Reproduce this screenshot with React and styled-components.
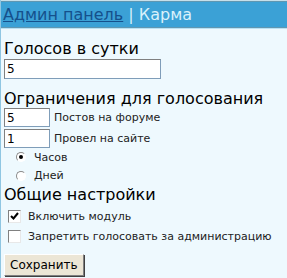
import React from "react";
import styled, { createGlobalStyle } from "styled-components";

const Global = createGlobalStyle`
  html, body {
    margin: 0;
    padding: 0;
    background: #eef9fe;
  }
  body {
    font-family: "DejaVu Sans", Tahoma, sans-serif;
  }
`;

const Panel = styled.div`
  width: 287px;
  height: 278px;
  background: #eef9fe;
  border-left: 1px solid #8fc6e2;
  box-sizing: border-box;
  overflow: hidden;
`;

const Header = styled.div`
  height: 24px;
  background: #3ba1d6;
  border-top: 1px solid #c6dfea;
  box-shadow: inset 0 1px 0 #5f97b2, inset 0 -1px 0 #5f97b2;
  border-bottom: 1px solid #b9e2f4;
  padding: 3px 0 0 3px;
  font-size: 16px;
  line-height: 22px;
  margin-left: -1px;
  white-space: nowrap;
`;

const HeaderLink = styled.a`
  color: #15508c;
  text-decoration: underline;
`;

const HeaderSep = styled.span`
  color: #d9f1fb;
`;

const Body = styled.div`
  padding: 10px 0 0 3px;
`;

const Heading = styled.div`
  font-size: 16px;
  color: #000;
  line-height: 19px;
  margin-top: ${(p) => p.$top || 0}px;
`;

const TextInput = styled.input`
  display: block;
  box-sizing: border-box;
  width: ${(p) => p.$width}px;
  height: ${(p) => p.$height || 19}px;
  margin: ${(p) => p.$top || 0}px 0 0 0;
  padding: 0 2px;
  border: 1px solid #7f9db9;
  border-top-color: #808080;
  border-left-color: #808080;
  background: #fff;
  font-family: "DejaVu Sans", Tahoma, sans-serif;
  font-size: 12px;
  color: #000;
`;

const Row = styled.div`
  display: flex;
  align-items: center;
  gap: 4px;
  margin-top: ${(p) => p.$top || 0}px;
  height: ${(p) => p.$height || 18}px;
  padding-left: ${(p) => p.$indent || 0}px;
`;

const Label = styled.span`
  font-size: 11px;
  color: #222;
`;

const Radio = styled.span`
  width: 10px;
  height: 10px;
  border-radius: 50%;
  box-sizing: border-box;
  border: 1px solid #8a8a8a;
  border-right-color: #fff;
  border-bottom-color: #fff;
  background: #fff;
  display: flex;
  align-items: center;
  justify-content: center;
  margin-right: 4px;
  &::after {
    content: "";
    width: 4px;
    height: 4px;
    border-radius: 50%;
    background: ${(p) => (p.$checked ? "#000" : "transparent")};
  }
`;

const Check = styled.span`
  width: 13px;
  height: 13px;
  box-sizing: border-box;
  border: 1px solid #808080;
  border-right-color: #e8e8e8;
  border-bottom-color: #e8e8e8;
  background: #fff;
  display: flex;
  align-items: center;
  justify-content: center;
  margin-right: 3px;
`;

const Button = styled.button`
  margin-top: 8px;
  height: 22px;
  padding: 0 5px;
  background: #ece6d6;
  border: 1px solid #fff;
  border-right-color: #808080;
  border-bottom-color: #808080;
  box-shadow: 1px 1px 0 #404040;
  font-family: "DejaVu Sans", Tahoma, sans-serif;
  font-size: 12px;
  color: #000;
`;

function Tick() {
  return (
    <svg width="9" height="9" viewBox="0 0 9 9">
      <path d="M1 4 L3.5 6.5 L8 1" fill="none" stroke="#000" strokeWidth="2" />
    </svg>
  );
}

export default function App() {
  return (
    <Panel>
      <Global />
      <Header>
        <HeaderLink href="#">Админ панель</HeaderLink>
        <HeaderSep> | Карма</HeaderSep>
      </Header>
      <Body>
        <Heading>Голосов в сутки</Heading>
        <TextInput $width={157} $height={20} $top={1} defaultValue="5" />
        <Heading $top={10}>Ограничения для голосования</Heading>
        <Row $height={19}>
          <TextInput $width={46} defaultValue="5" />
          <Label>Постов на форуме</Label>
        </Row>
        <Row $top={2} $height={19}>
          <TextInput $width={46} defaultValue="1" />
          <Label>Провел на сайте</Label>
        </Row>
        <Row $indent={12}>
          <Radio $checked />
          <Label>Часов</Label>
        </Row>
        <Row $indent={12} $height={19}>
          <Radio />
          <Label>Дней</Label>
        </Row>
        <Heading>Общие настройки</Heading>
        <Row $indent={4} $top={2} $height={20}>
          <Check>
            <Tick />
          </Check>
          <Label>Включить модуль</Label>
        </Row>
        <Row $indent={4} $height={20}>
          <Check />
          <Label>Запретить голосовать за администрацию</Label>
        </Row>
        <Button>Сохранить</Button>
      </Body>
    </Panel>
  );
}
